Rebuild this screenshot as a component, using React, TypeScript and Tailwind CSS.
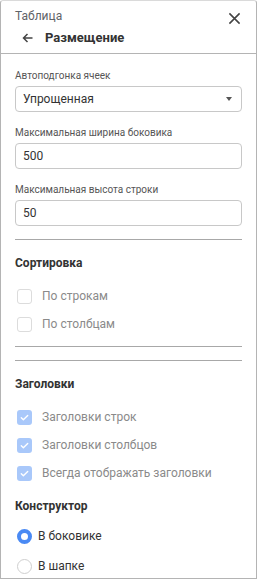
import React from 'react';

function Checkbox({ checked, label }: { checked?: boolean; label: string }) {
  return (
    <div className="flex h-[28px] items-center">
      {checked ? (
        <span className="ml-[2px] flex h-[15px] w-[15px] items-center justify-center rounded-[3px] bg-[#a9c8fa]">
          <svg width="11" height="11" viewBox="0 0 24 24" fill="none" stroke="#fff" strokeWidth="3" strokeLinecap="round" strokeLinejoin="round">
            <path d="M5 12.5l4.5 4.5L19 7.5" />
          </svg>
        </span>
      ) : (
        <span className="ml-[2px] h-[15px] w-[15px] rounded-[3px] border border-[#dcdcdc] bg-white" />
      )}
      <span className="ml-[10px] text-[12px] text-[#8a8a8a]">{label}</span>
    </div>
  );
}

function Radio({ checked, label }: { checked?: boolean; label: string }) {
  return (
    <div className="flex h-[30px] items-center">
      {checked ? (
        <span className="ml-[2px] h-[15px] w-[15px] rounded-full border-[4px] border-[#4a8af4] bg-white" />
      ) : (
        <span className="ml-[2px] h-[15px] w-[15px] rounded-full border border-[#cfcfcf] bg-white" />
      )}
      <span className="ml-[6px] text-[12px] text-[#333]">{label}</span>
    </div>
  );
}

function Field({ label, children, top }: { label: string; children: React.ReactNode; top: string }) {
  return (
    <div className={top}>
      <div className="text-[10px] leading-[14px] text-[#555]">{label}</div>
      <div className="mt-[3px] flex h-[26px] items-center rounded-[4px] border border-[#c8c8c8] px-[7px] text-[12px] text-[#333]">
        {children}
      </div>
    </div>
  );
}

export default function App() {
  return (
    <div
      className="box-border h-[579px] w-[257px] overflow-hidden rounded-t-[3px] border border-[#b4b4b4] border-t-[#dadada] bg-white"
      style={{ fontFamily: 'Roboto, "Liberation Sans", sans-serif' }}
    >
      <div className="px-[14px] pt-[7px]">
        <div className="flex h-[16px] items-center justify-between">
          <span className="text-[12px] text-[#5f6368]">Таблица</span>
          <svg className="mr-[1px] mt-[4px]" width="13" height="13" viewBox="0 0 14 14" fill="none" stroke="#444" strokeWidth="1.7">
            <path d="M1.5 1.5l11 11M12.5 1.5l-11 11" />
          </svg>
        </div>
        <div className="mt-[4px] flex h-[20px] items-center">
          <svg className="ml-[7px]" width="11" height="10" viewBox="0 0 11 10" fill="none" stroke="#444" strokeWidth="1.5">
            <path d="M10.5 5H1.5M5.5 1L1.5 5l4 4" />
          </svg>
          <span className="ml-[12px] text-[13px] font-bold text-[#333]">Размещение</span>
        </div>
      </div>
      <div className="mt-[5px] h-px bg-[#b4b4b4]" />

      <div className="px-[14px]">
        <Field label="Автоподгонка ячеек" top="mt-[15px]">
          <span className="flex-1">Упрощенная</span>
          <svg className="mr-[2px]" width="6" height="4" viewBox="0 0 6 4">
            <path d="M0 0h6L3 4z" fill="#555" />
          </svg>
        </Field>
        <Field label="Максимальная ширина боковика" top="mt-[14px]">
          500
        </Field>
        <Field label="Максимальная высота строки" top="mt-[14px]">
          50
        </Field>

        <div className="mt-[13px] h-px bg-[#a8a8a8]" />
        <div className="mt-[14px] text-[12px] font-bold leading-[18px] text-[#333]">Сортировка</div>
        <div className="mt-[10px]">
          <Checkbox label="По строкам" />
          <Checkbox label="По столбцам" />
        </div>
        <div className="mt-[8px] h-px bg-[#a8a8a8]" />
        <div className="mt-[13px] h-px bg-[#a8a8a8]" />

        <div className="mt-[14px] text-[12px] font-bold leading-[18px] text-[#333]">Заголовки</div>
        <div className="mt-[10px]">
          <Checkbox checked label="Заголовки строк" />
          <Checkbox checked label="Заголовки столбцов" />
          <Checkbox checked label="Всегда отображать заголовки" />
        </div>

        <div className="mt-[10px] text-[12px] font-bold leading-[18px] text-[#333]">Конструктор</div>
        <div className="mt-[6px]">
          <Radio checked label="В боковике" />
          <Radio label="В шапке" />
        </div>
      </div>
    </div>
  );
}
